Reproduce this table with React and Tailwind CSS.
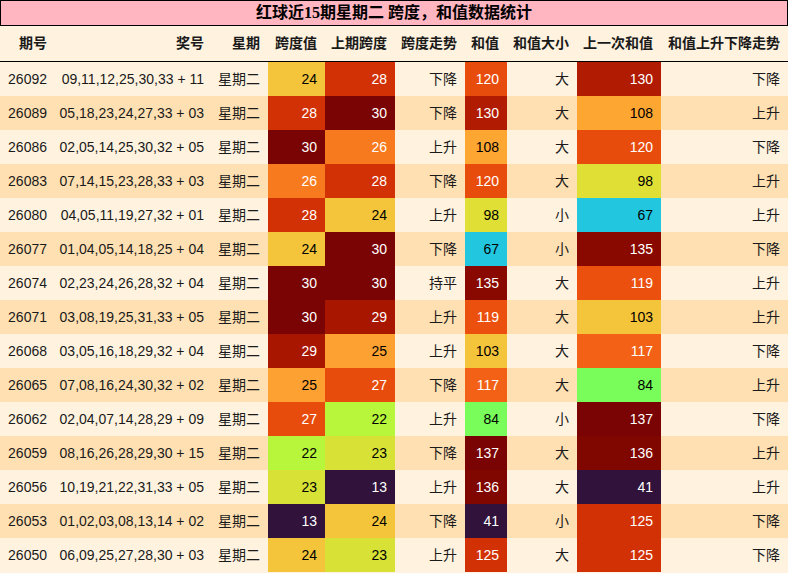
import React from 'react'

const spanColor = {
  13: ['#30123b', 'text-white'],
  22: ['#b7f63a', 'text-black'],
  23: ['#d8e236', 'text-black'],
  24: ['#f4c53b', 'text-black'],
  25: ['#fda232', 'text-black'],
  26: ['#f77a1e', 'text-white'],
  27: ['#e84c0d', 'text-white'],
  28: ['#d23105', 'text-white'],
  29: ['#a81600', 'text-white'],
  30: ['#7a0403', 'text-white'],
}

const sumColor = {
  41: ['#30123b', 'text-white'],
  67: ['#22c7df', 'text-black'],
  84: ['#79fd5a', 'text-black'],
  98: ['#dfdf36', 'text-black'],
  103: ['#f4c53b', 'text-black'],
  108: ['#fda632', 'text-black'],
  117: ['#f26115', 'text-white'],
  119: ['#eb500e', 'text-white'],
  120: ['#e84c0d', 'text-white'],
  125: ['#d23105', 'text-white'],
  130: ['#b01b01', 'text-white'],
  135: ['#890900', 'text-white'],
  136: ['#800600', 'text-white'],
  137: ['#7a0403', 'text-white'],
}

const rows = [
  ['26092', '09,11,12,25,30,33 + 11', 24, 28, '下降', 120, '大', 130, '下降'],
  ['26089', '05,18,23,24,27,33 + 03', 28, 30, '下降', 130, '大', 108, '上升'],
  ['26086', '02,05,14,25,30,32 + 05', 30, 26, '上升', 108, '大', 120, '下降'],
  ['26083', '07,14,15,23,28,33 + 03', 26, 28, '下降', 120, '大', 98, '上升'],
  ['26080', '04,05,11,19,27,32 + 01', 28, 24, '上升', 98, '小', 67, '上升'],
  ['26077', '01,04,05,14,18,25 + 04', 24, 30, '下降', 67, '小', 135, '下降'],
  ['26074', '02,23,24,26,28,32 + 04', 30, 30, '持平', 135, '大', 119, '上升'],
  ['26071', '03,08,19,25,31,33 + 05', 30, 29, '上升', 119, '大', 103, '上升'],
  ['26068', '03,05,16,18,29,32 + 04', 29, 25, '上升', 103, '大', 117, '下降'],
  ['26065', '07,08,16,24,30,32 + 02', 25, 27, '下降', 117, '大', 84, '上升'],
  ['26062', '02,04,07,14,28,29 + 09', 27, 22, '上升', 84, '小', 137, '下降'],
  ['26059', '08,16,26,28,29,30 + 15', 22, 23, '下降', 137, '大', 136, '上升'],
  ['26056', '10,19,21,22,31,33 + 05', 23, 13, '上升', 136, '大', 41, '上升'],
  ['26053', '01,02,03,08,13,14 + 02', 13, 24, '下降', 41, '小', 125, '下降'],
  ['26050', '06,09,25,27,28,30 + 03', 24, 23, '上升', 125, '大', 125, '下降'],
]

const headers = ['期号', '奖号', '星期', '跨度值', '上期跨度', '跨度走势', '和值', '和值大小', '上一次和值', '和值上升下降走势']

const grid = 'grid grid-cols-[55px_157px_56px_57px_70px_70px_42px_70px_84px_127px]'

const Cell = ({ children, bg, cls = '' }) => (
  <div className={`flex items-center justify-end pr-2 ${cls}`} style={bg ? { backgroundColor: bg } : undefined}>
    {children}
  </div>
)

export default function App() {
  return (
    <div className="w-[788px] h-[573px] overflow-hidden bg-[#fff3e0] text-[14px] text-[#1a1a1a] font-['Liberation_Sans','Noto_Sans_CJK_SC',sans-serif]">
      <div className="h-[26px] bg-[#ffb6c1] border border-black flex items-center justify-center font-bold text-[16px] text-black font-['Liberation_Serif','Noto_Sans_CJK_SC',serif]">
        红球近15期星期二 跨度，和值数据统计
      </div>
      <div className={`${grid} h-[36px] border-b border-black font-bold`}>
        {headers.map((h) => (
          <Cell key={h}>{h}</Cell>
        ))}
      </div>
      {rows.map((r, i) => {
        const [a, b, span, prevSpan, trend, sum, size, prevSum, sumTrend] = r
        const s1 = spanColor[span]
        const s2 = spanColor[prevSpan]
        const m1 = sumColor[sum]
        const m2 = sumColor[prevSum]
        return (
          <div key={a} className={`${grid} h-[34px] ${i % 2 ? 'bg-[#ffe0b2]' : 'bg-[#fff3e0]'}`}>
            <Cell>{a}</Cell>
            <Cell>{b}</Cell>
            <Cell>星期二</Cell>
            <Cell bg={s1[0]} cls={s1[1]}>{span}</Cell>
            <Cell bg={s2[0]} cls={s2[1]}>{prevSpan}</Cell>
            <Cell>{trend}</Cell>
            <Cell bg={m1[0]} cls={m1[1]}>{sum}</Cell>
            <Cell>{size}</Cell>
            <Cell bg={m2[0]} cls={m2[1]}>{prevSum}</Cell>
            <Cell>{sumTrend}</Cell>
          </div>
        )
      })}
    </div>
  )
}
